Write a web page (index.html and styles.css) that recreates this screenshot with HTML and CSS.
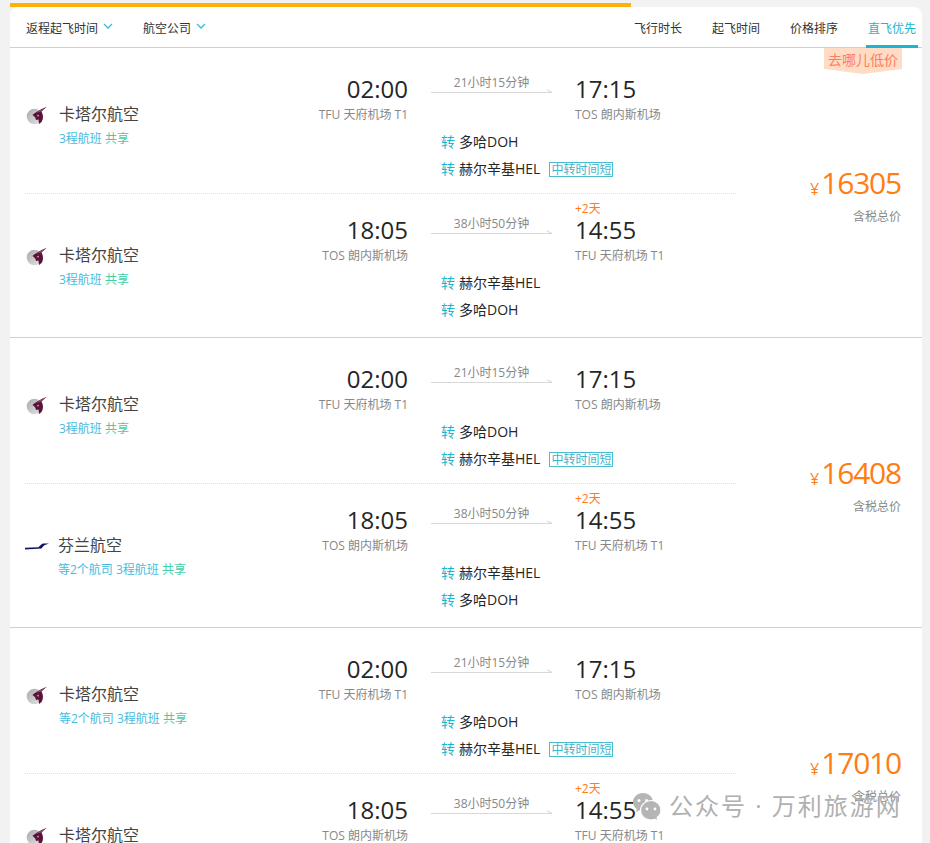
FILE: index.html
```html
<!DOCTYPE html>
<html lang="zh-CN">
<head>
<meta charset="utf-8">
<title>返程航班</title>
<link rel="stylesheet" href="styles.css">
</head>
<body>
<svg class="defs" width="0" height="0" aria-hidden="true">
  <defs>
    <linearGradient id="qgrey" x1="0" y1="0" x2="1" y2="1">
      <stop offset="0" stop-color="#a9a9ad"/>
      <stop offset="1" stop-color="#e6e6e8"/>
    </linearGradient>
  </defs>
  <symbol id="qatar" viewBox="0 0 22 22">
    <circle cx="8.500" cy="12.500" r="7.800" fill="url(#qgrey)"/>
    <path d="M6.500 11C9 8.500 13 6 20.700 2.700L15.500 7.500C17.500 11 17.500 15 15.500 18L13 20 12.500 15.500 10 16C9.500 14 9 12.500 6.500 11z" fill="#5c1238"/>
    <path d="M9.500 9L20.700 2.700 14.500 7.500z" fill="#93597a"/>
    <path d="M10.500 12l2-1.500.5 2z" fill="#c9a9bb"/>
  </symbol>
  <symbol id="finnair" viewBox="0 0 24 7">
    <path d="M0 4.800L13.500 4.200C15 2.800 16.500 1 18 .5H24L20 2C18.500 2.500 17.500 4 16.500 5.500L0 6.500z" fill="#0b1560"/>
  </symbol>
  <symbol id="chev" viewBox="0 0 10 6">
    <path d="M1 1l4 4 4-4" fill="none" stroke="#35bfe0" stroke-width="1.300"/>
  </symbol>
</svg>

<main class="card">
  <div class="progress"></div>
  <header class="toolbar">
    <div class="filters">
      <span class="filter">返程起飞时间<svg class="chev"><use href="#chev"/></svg></span>
      <span class="filter">航空公司<svg class="chev"><use href="#chev"/></svg></span>
    </div>
    <nav class="sorts">
      <span class="sort">飞行时长</span>
      <span class="sort">起飞时间</span>
      <span class="sort">价格排序</span>
      <span class="sort active">直飞优先</span>
    </nav>
  </header>

  <section class="group">
    <div class="legs">
      <article class="leg first">
        <div class="airline">
          <svg class="logo"><use href="#qatar"/></svg>
          <div><div class="name">卡塔尔航空</div><div class="sub">3程航班 <em>共享</em></div></div>
        </div>
        <div class="main">
          <div class="times">
            <div class="dep"><div class="time">02:00</div><div class="port">TFU 天府机场 T1</div></div>
            <div class="dur"><span>21小时15分钟</span></div>
            <div class="arr"><div class="time">17:15</div><div class="port">TOS 朗内斯机场</div></div>
          </div>
          <div class="stop"><b>转</b>多哈DOH</div>
          <div class="stop"><b>转</b>赫尔辛基HEL<i class="tag">中转时间短</i></div>
        </div>
      </article>
      <article class="leg">
        <div class="airline">
          <svg class="logo"><use href="#qatar"/></svg>
          <div><div class="name">卡塔尔航空</div><div class="sub">3程航班 <em>共享</em></div></div>
        </div>
        <div class="main">
          <div class="times">
            <div class="dep"><div class="time">18:05</div><div class="port">TOS 朗内斯机场</div></div>
            <div class="dur"><span>38小时50分钟</span></div>
            <div class="arr"><div class="plus">+2天</div><div class="time">14:55</div><div class="port">TFU 天府机场 T1</div></div>
          </div>
          <div class="stop"><b>转</b>赫尔辛基HEL</div>
          <div class="stop"><b>转</b>多哈DOH</div>
        </div>
      </article>
    </div>
    <aside class="price">
      <div class="ribbon">去哪儿低价</div>
      <div class="amount"><small>¥</small>16305</div>
      <div class="tax">含税总价</div>
    </aside>
  </section>

  <section class="group">
    <div class="legs">
      <article class="leg first">
        <div class="airline">
          <svg class="logo"><use href="#qatar"/></svg>
          <div><div class="name">卡塔尔航空</div><div class="sub">3程航班 <em>共享</em></div></div>
        </div>
        <div class="main">
          <div class="times">
            <div class="dep"><div class="time">02:00</div><div class="port">TFU 天府机场 T1</div></div>
            <div class="dur"><span>21小时15分钟</span></div>
            <div class="arr"><div class="time">17:15</div><div class="port">TOS 朗内斯机场</div></div>
          </div>
          <div class="stop"><b>转</b>多哈DOH</div>
          <div class="stop"><b>转</b>赫尔辛基HEL<i class="tag">中转时间短</i></div>
        </div>
      </article>
      <article class="leg">
        <div class="airline">
          <svg class="logo fin"><use href="#finnair"/></svg>
          <div><div class="name">芬兰航空</div><div class="sub">等2个航司 3程航班 <em>共享</em></div></div>
        </div>
        <div class="main">
          <div class="times">
            <div class="dep"><div class="time">18:05</div><div class="port">TOS 朗内斯机场</div></div>
            <div class="dur"><span>38小时50分钟</span></div>
            <div class="arr"><div class="plus">+2天</div><div class="time">14:55</div><div class="port">TFU 天府机场 T1</div></div>
          </div>
          <div class="stop"><b>转</b>赫尔辛基HEL</div>
          <div class="stop"><b>转</b>多哈DOH</div>
        </div>
      </article>
    </div>
    <aside class="price">
      <div class="amount"><small>¥</small>16408</div>
      <div class="tax">含税总价</div>
    </aside>
  </section>

  <section class="group">
    <div class="legs">
      <article class="leg first">
        <div class="airline">
          <svg class="logo"><use href="#qatar"/></svg>
          <div><div class="name">卡塔尔航空</div><div class="sub">等2个航司 3程航班 <em>共享</em></div></div>
        </div>
        <div class="main">
          <div class="times">
            <div class="dep"><div class="time">02:00</div><div class="port">TFU 天府机场 T1</div></div>
            <div class="dur"><span>21小时15分钟</span></div>
            <div class="arr"><div class="time">17:15</div><div class="port">TOS 朗内斯机场</div></div>
          </div>
          <div class="stop"><b>转</b>多哈DOH</div>
          <div class="stop"><b>转</b>赫尔辛基HEL<i class="tag">中转时间短</i></div>
        </div>
      </article>
      <article class="leg">
        <div class="airline">
          <svg class="logo"><use href="#qatar"/></svg>
          <div><div class="name">卡塔尔航空</div><div class="sub">3程航班 <em>共享</em></div></div>
        </div>
        <div class="main">
          <div class="times">
            <div class="dep"><div class="time">18:05</div><div class="port">TOS 朗内斯机场</div></div>
            <div class="dur"><span>38小时50分钟</span></div>
            <div class="arr"><div class="plus">+2天</div><div class="time">14:55</div><div class="port">TFU 天府机场 T1</div></div>
          </div>
          <div class="stop"><b>转</b>赫尔辛基HEL</div>
          <div class="stop"><b>转</b>多哈DOH</div>
        </div>
      </article>
    </div>
    <aside class="price">
      <div class="amount"><small>¥</small>17010</div>
      <div class="tax">含税总价</div>
    </aside>
  </section>
</main>

<div class="mark">
  <svg class="wechat" viewBox="0 0 28 27" aria-hidden="true">
    <path d="M10 0C4.500 0 0 4 0 9c0 2.900 1.500 5.400 3.800 7L3 19l3.300-1.700c1.200.4 2.400.7 3.700.7 5.500 0 10-4 10-9s-4.500-9-10-9z" fill="#b5b5b5"/>
    <circle cx="6" cy="7.500" r="1.500" fill="#fff"/>
    <circle cx="13.500" cy="7.500" r="1.500" fill="#fff"/>
    <path d="M18 7.500c-5.600 0-10.500 4.300-10.500 10s4.900 9.500 10.500 9.500c1.400 0 2.700-.3 3.900-.7L25 27.800l-.8-3.300C26.500 22.800 28 20.300 28 17.500c0-5.700-4.400-10-10-10z" fill="#b5b5b5" stroke="#fff" stroke-width="1.200"/>
    <circle cx="14" cy="16" r="1.400" fill="#fff"/>
    <circle cx="22" cy="16" r="1.400" fill="#fff"/>
  </svg>
  <span>公众号 · 万利旅游网</span>
</div>
</body>
</html>
```
FILE: styles.css
```css
* { box-sizing: border-box; }
html, body { margin: 0; height: 843px; overflow: hidden; }
body {
  background: #f2f2f2;
  color: #333;
  font-family: "Open Sans", "Noto Sans CJK SC", sans-serif;
  font-size: 12px;
  position: relative;
}
.defs { position: absolute; }

.card {
  width: 912px;
  margin: 7px 0 0 10px;
  background: #fff;
  border-radius: 8px 8px 0 0;
  position: relative;
}
.progress {
  position: absolute;
  left: 0;
  top: -4px;
  width: 621px;
  height: 4px;
  background: #ffb10a;
}

.toolbar {
  height: 41px;
  display: flex;
  justify-content: space-between;
  border-bottom: 1px solid #d0d0d0;
  padding-left: 16px;
}
.filters { display: flex; gap: 30px; padding-top: 13px; }
.filter { display: flex; line-height: 18px; }
.chev { width: 10px; height: 6px; margin: 3px 0 0 5px; }
.sorts { display: flex; padding-right: 4px; gap: 26px; }
.sort {
  width: 52px;
  text-align: center;
  padding-top: 13px;
  line-height: 18px;
  height: 41px;
}
.sort.active { color: #1ab5d0; border-bottom: 3px solid #1ab5d0; }

.group { display: flex; height: 290px; border-bottom: 1px solid #d0d0d0; }
.legs { width: 726px; flex: none; }
.leg {
  display: flex;
  margin-left: 15px;
  padding-left: 1px;
  height: 143px;
}
.leg.first { height: 146px; padding-top: 5px; border-bottom: 1px dotted #e0e0e0; }

.airline { width: 274px; flex: none; display: flex; padding-top: 50px; }
.logo { width: 22px; height: 22px; flex: none; margin: 1px 11px 0 0; }
.logo.fin { width: 24px; height: 7px; margin: 9px 9px 0 -1px; }
.name { font-size: 16px; line-height: 22px; color: #444; }
.sub { margin-top: 6px; line-height: 16px; color: #45bce0; }
.sub em { font-style: normal; color: #3fd0a8; }

.main { flex: 1; padding-top: 20px; }
.times { display: flex; height: 51px; margin-bottom: 3px; }
.dep { width: 108px; flex: none; text-align: right; }
.arr { margin-left: 23px; position: relative; }
.time { font-size: 24px; line-height: 32px; margin-bottom: 1px; color: #262626; }
.port { line-height: 18px; color: #888; white-space: nowrap; }
.plus {
  position: absolute;
  left: 0;
  top: -13px;
  line-height: 16px;
  color: #ff7d13;
}
.dur {
  width: 121px;
  flex: none;
  margin-left: 23px;
  height: 18px;
  margin-top: 2px;
  border-bottom: 1px solid #d8d8d8;
  text-align: center;
  color: #888;
  line-height: 16px;
  position: relative;
}
.dur::after {
  content: "";
  position: absolute;
  right: 0;
  bottom: -1px;
  width: 6px;
  height: 3px;
  border-bottom: 1px solid #d8d8d8;
  transform: rotate(26deg);
  transform-origin: right bottom;
}
.stop {
  height: 27px;
  display: flex;
  align-items: center;
  font-size: 14px;
  color: #262626;
  padding-left: 141px;
}
.stop b { font-weight: 400; color: #1ab5d0; margin-right: 4px; }
.tag {
  font-style: normal;
  font-size: 12px;
  line-height: 13px;
  border: 1px solid #4bbccf;
  color: #3cb6cc;
  padding: 0 1px;
  margin: 4px 0 0 9px;
}

.price {
  flex: 1;
  position: relative;
  text-align: right;
  padding: 112px 21px 0 0;
}
.ribbon {
  position: absolute;
  top: 0;
  right: 20px;
  width: 78px;
  height: 26px;
  background: #ffdcc6;
  color: #ff7d5c;
  font-size: 14px;
  line-height: 23px;
  text-align: center;
  clip-path: polygon(0 0, 100% 0, 100% 21px, 50% 100%, 0 21px);
}
.amount {
  font-size: 30px;
  line-height: 46px;
  color: #ff7d13;
  letter-spacing: -1.200px;
}
.amount small { font-size: 16px; line-height: 1; margin-right: 2px; letter-spacing: 0; vertical-align: -1px; }
.tax { color: #888; line-height: 18px; margin-top: 2px; }

.mark {
  position: absolute;
  left: 633px;
  top: 790px;
  display: flex;
  align-items: center;
  gap: 8px;
  color: #b0b0b0;
  font-size: 24px;
  line-height: 32px;
  letter-spacing: 2px;
  white-space: nowrap;
}
.wechat { width: 28px; height: 27px; flex: none; overflow: visible; }
```
